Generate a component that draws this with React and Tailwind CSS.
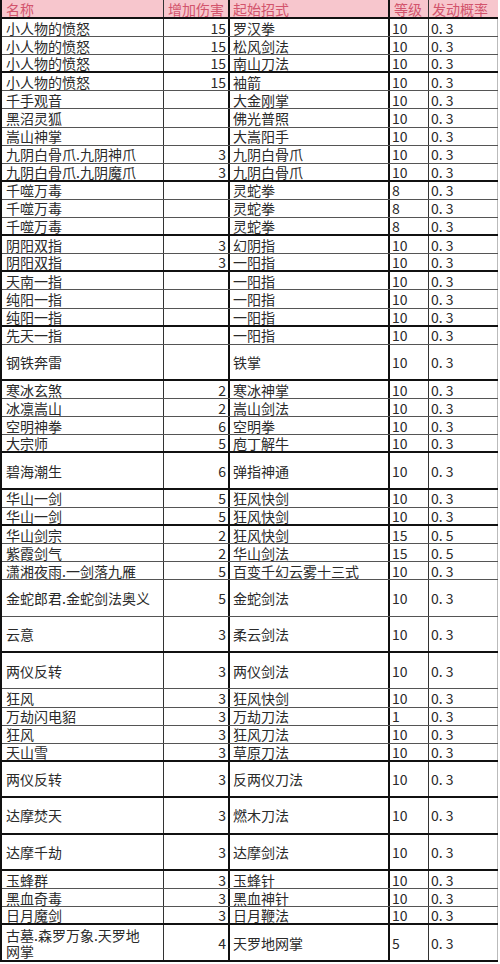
// 武功连招表：名称 / 增加伤害 / 起始招式 / 等级 / 发动概率
const ROWS = [
  ['小人物的愤怒', '15', '罗汉拳', '10', '0. 3'],
  ['小人物的愤怒', '15', '松风剑法', '10', '0. 3'],
  ['小人物的愤怒', '15', '南山刀法', '10', '0. 3', 1],
  ['小人物的愤怒', '15', '袖箭', '10', '0. 3'],
  ['千手观音', '', '大金刚掌', '10', '0. 3'],
  ['黑沼灵狐', '', '佛光普照', '10', '0. 3'],
  ['嵩山神掌', '', '大嵩阳手', '10', '0. 3'],
  ['九阴白骨爪.九阴神爪', '3', '九阴白骨爪', '10', '0. 3'],
  ['九阴白骨爪.九阴魔爪', '3', '九阴白骨爪', '10', '0. 3', 1],
  ['千噬万毒', '', '灵蛇拳', '8', '0. 3'],
  ['千噬万毒', '', '灵蛇拳', '8', '0. 3'],
  ['千噬万毒', '', '灵蛇拳', '8', '0. 3', 1],
  ['阴阳双指', '3', '幻阴指', '10', '0. 3'],
  ['阴阳双指', '3', '一阳指', '10', '0. 3', 1],
  ['天南一指', '', '一阳指', '10', '0. 3'],
  ['纯阳一指', '', '一阳指', '10', '0. 3'],
  ['纯阳一指', '', '一阳指', '10', '0. 3', 1],
  ['先天一指', '', '一阳指', '10', '0. 3'],
  ['钢铁奔雷', '', '铁掌', '10', '0. 3', 1, 1],
  ['寒冰玄煞', '2', '寒冰神掌', '10', '0. 3'],
  ['冰凛嵩山', '2', '嵩山剑法', '10', '0. 3'],
  ['空明神拳', '6', '空明拳', '10', '0. 3'],
  ['大宗师', '5', '庖丁解牛', '10', '0. 3', 1],
  ['碧海潮生', '6', '弹指神通', '10', '0. 3', 1, 1],
  ['华山一剑', '5', '狂风快剑', '10', '0. 3'],
  ['华山一剑', '5', '狂风快剑', '10', '0. 3', 1],
  ['华山剑宗', '2', '狂风快剑', '15', '0. 5'],
  ['紫霞剑气', '2', '华山剑法', '15', '0. 5'],
  ['潇湘夜雨.一剑落九雁', '5', '百变千幻云雾十三式', '10', '0. 3'],
  ['金蛇郎君.金蛇剑法奥义', '5', '金蛇剑法', '10', '0. 3', 0, 1],
  ['云意', '3', '柔云剑法', '10', '0. 3', 1, 1],
  ['两仪反转', '3', '两仪剑法', '10', '0. 3', 0, 1],
  ['狂风', '3', '狂风快剑', '10', '0. 3'],
  ['万劫闪电貂', '3', '万劫刀法', '1', '0. 3'],
  ['狂风', '3', '狂风刀法', '10', '0. 3'],
  ['天山雪', '3', '草原刀法', '10', '0. 3', 1],
  ['两仪反转', '3', '反两仪刀法', '10', '0. 3', 1, 1],
  ['达摩焚天', '3', '燃木刀法', '10', '0. 3', 1, 1],
  ['达摩千劫', '3', '达摩剑法', '10', '0. 3', 1, 1],
  ['玉蜂群', '3', '玉蜂针', '10', '0. 3'],
  ['黑血奇毒', '3', '黑血神针', '10', '0. 3'],
  ['日月魔剑', '3', '日月鞭法', '10', '0. 3', 1],
  ['古墓.森罗万象.天罗地\n网掌', '4', '天罗地网掌', '5', '0. 3', 1, 1],
];

function Row({ row }) {
  const [name, dmg, move, level, rate, thick, tall] = row;
  const h = tall ? 'h-[36.4px]' : 'h-[18.1px]';
  const bottom = thick ? 'border-b-2 border-b-[#111]' : 'border-b border-b-[#555]';
  return (
    <div className={`flex ${h} ${bottom}`}>
      <div className="w-[162px] border-r border-[#333] pl-[4px] flex items-center whitespace-pre-line leading-[16px]">{name}</div>
      <div className="w-[66px] border-r-2 border-[#111] pr-[2px] flex items-center justify-end">{dmg}</div>
      <div className="w-[160px] border-r-2 border-[#111] pl-[3px] flex items-center">{move}</div>
      <div className="w-[39px] border-r border-[#333] pl-[2px] flex items-center">{level}</div>
      <div className="w-[69px] border-r border-[#bbb] pl-[2px] flex items-center">{rate}</div>
    </div>
  );
}

export default function App() {
  return (
    <div className="w-[500px] h-[964px] bg-white overflow-hidden">
      <div
        className="w-[498px] border-l-2 border-[#111] text-[14px] leading-none text-[#2a2a2a]"
        style={{ fontFamily: '"Noto Sans CJK SC", "Liberation Sans", sans-serif' }}
      >
        <div className="flex h-[19px] bg-[#f7c6cd] text-[#d2546c] border-b-2 border-b-[#111]">
          <div className="w-[162px] border-r border-[#333] pl-[4px] flex items-center">名称</div>
          <div className="w-[66px] border-r-2 border-[#111] flex items-center justify-center">增加伤害</div>
          <div className="w-[160px] border-r-2 border-[#111] pl-[3px] flex items-center">起始招式</div>
          <div className="w-[39px] border-r border-[#333] pl-[4px] flex items-center">等级</div>
          <div className="w-[69px] pl-[3px] flex items-center">发动概率</div>
        </div>
        {ROWS.map((r, i) => (
          <Row key={i} row={r} />
        ))}
      </div>
    </div>
  );
}
